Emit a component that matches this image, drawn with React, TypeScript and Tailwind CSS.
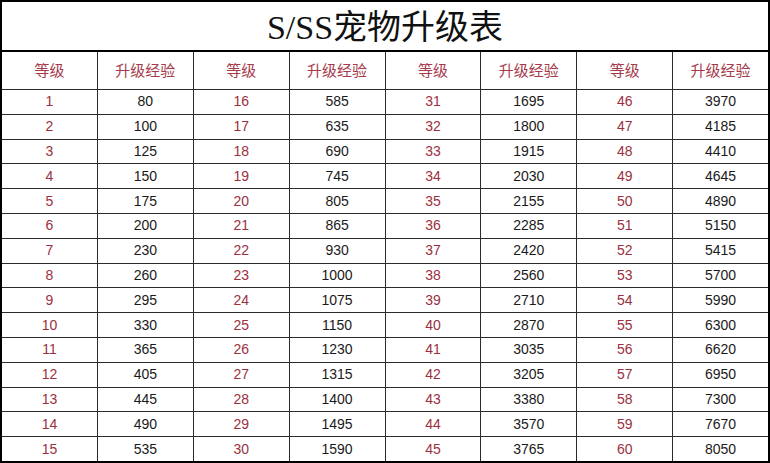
import React from "react";

const data: number[][] = [
  [80, 100, 125, 150, 175, 200, 230, 260, 295, 330, 365, 405, 445, 490, 535],
  [585, 635, 690, 745, 805, 865, 930, 1000, 1075, 1150, 1230, 1315, 1400, 1495, 1590],
  [1695, 1800, 1915, 2030, 2155, 2285, 2420, 2560, 2710, 2870, 3035, 3205, 3380, 3570, 3765],
  [3970, 4185, 4410, 4645, 4890, 5150, 5415, 5700, 5990, 6300, 6620, 6950, 7300, 7670, 8050],
];

export default function App() {
  const headers: string[] = [];
  for (let i = 0; i < 4; i++) {
    headers.push("等级", "升级经验");
  }
  const rows = Array.from({ length: 15 }, (_, r) => r);
  return (
    <div className="w-[770px] h-[463px] bg-white border-2 border-black flex flex-col box-border overflow-hidden">
      <div className="h-[50px] shrink-0 border-b-2 border-black flex items-center justify-center text-[34px] text-[#111] leading-none font-['Liberation_Serif','Noto_Sans_CJK_SC',serif]">
        <span className="pt-[4px]">S/SS宠物升级表</span>
      </div>
      <div className="flex-1 grid grid-cols-8 grid-rows-[37px_repeat(15,minmax(0,1fr))] gap-px bg-[#2a2a2a]">
        {headers.map((h, i) => (
          <div
            key={"h" + i}
            className="bg-white flex items-center justify-center text-[15px] text-[#a63a4a] font-['Noto_Sans_CJK_SC',sans-serif]"
          >
            {h}
          </div>
        ))}
        {rows.map((r) =>
          data.map((col, c) => (
            <React.Fragment key={r + "-" + c}>
              <div className="bg-white flex items-center justify-center text-[14px] text-[#9b3040] font-['Liberation_Sans',sans-serif]">
                {c * 15 + r + 1}
              </div>
              <div className="bg-white flex items-center justify-center text-[14px] text-[#1a1a1a] font-['Liberation_Sans',sans-serif]">
                {col[r]}
              </div>
            </React.Fragment>
          ))
        )}
      </div>
    </div>
  );
}
